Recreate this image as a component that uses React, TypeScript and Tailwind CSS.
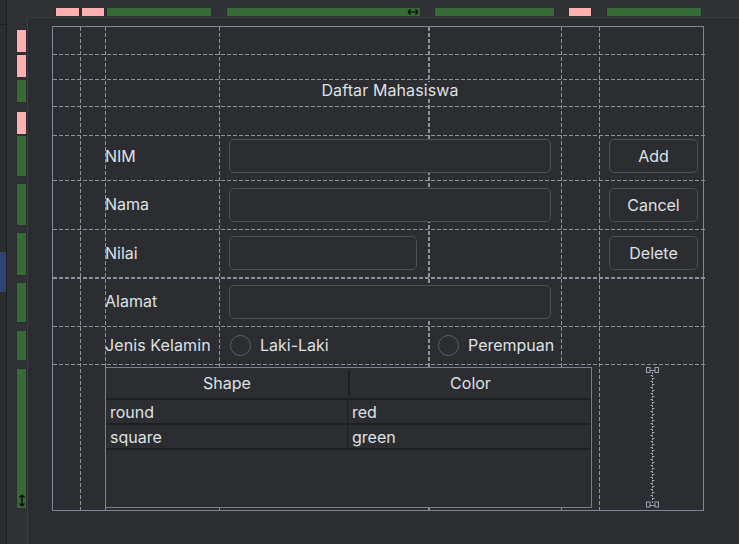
import React from "react";

const DASH = "#8a93a2";

function Field({ className = "" }: { className?: string }) {
  return <div className={"h-[34px] rounded-[5px] border border-[#4e5157] bg-[#2b2d30] " + className} />;
}

function Btn({ label }: { label: string }) {
  return (
    <div className="h-[34px] w-[89px] rounded-[5px] border border-[#4e5157] bg-[#2b2d30] flex items-center justify-center text-[#dfe1e5]">
      {label}
    </div>
  );
}

function Radio({ label }: { label: string }) {
  return (
    <div className="flex items-center">
      <div className="w-[21px] h-[21px] rounded-full border border-[#5f6268] bg-[#2b2d30]" />
      <span className="ml-[9px] text-[#dfe1e5]">{label}</span>
    </div>
  );
}

function Guides() {
  const vx = [27.5, 52.5, 166.5, 508.5, 546.5];
  const hy = [27.5, 52.5, 79.5, 108.5, 153.5, 202.5, 299.5, 337.5];
  return (
    <svg className="absolute left-0 top-0 pointer-events-none" width="653" height="483" style={{ overflow: "visible" }}>
      {vx.map((x) => (
        <line key={"v" + x} x1={x} y1={0} x2={x} y2={483} stroke={DASH} strokeWidth={1} strokeDasharray="4 2" />
      ))}
      <line x1={376} y1={0} x2={376} y2={483} stroke={DASH} strokeWidth={2} strokeDasharray="4 2" />
      {hy.map((y) => (
        <line key={"h" + y} x1={0} y1={y} x2={652} y2={y} stroke={DASH} strokeWidth={1} strokeDasharray="4 2" />
      ))}
      <line x1={0} y1={251} x2={652} y2={251} stroke={DASH} strokeWidth={2} strokeDasharray="4 2" />
    </svg>
  );
}

function Spacer() {
  const ticks = Array.from({ length: 42 }, (_, i) => i);
  return (
    <svg width="14" height="141" viewBox="0 0 14 141" fill="none" stroke="#9aa3b1" strokeWidth="1">
      <rect x="0.5" y="0.5" width="3.5" height="5" />
      <rect x="9" y="0.5" width="3.5" height="5" />
      <path d="M4 3.5 H9" />
      <line x1="6.5" y1="5" x2="6.5" y2="136" strokeDasharray="2 1" />
      {ticks.map((i) => (
        <path key={i} d={i % 2 === 0 ? `M4.5 ${8.5 + i * 3} H6.5` : `M6.5 ${8.5 + i * 3} H8.5`} />
      ))}
      <rect x="0.5" y="135" width="3.5" height="5" />
      <rect x="9" y="135" width="3.5" height="5" />
      <path d="M4 138.5 H9" />
    </svg>
  );
}

export default function App() {
  return (
    <div className="w-[739px] h-[544px] overflow-hidden flex bg-[#303134] font-['Inter','Noto_Sans',sans-serif] text-[16px] text-[#dfe1e5]">
      {/* far-left strip */}
      <div className="w-[7px] h-full flex flex-col bg-[#2b2d30] border-r border-[#1e1f22]">
        <div className="h-[25px] border-b border-[#1e1f22]" />
        <div className="mt-[227px] h-[40px] w-[6px] bg-[#2e4573]" />
      </div>

      <div className="flex-1 flex flex-col">
        {/* top ruler */}
        <div className="h-[17px] flex items-start">
          <div className="ml-[48px] mt-[7px] w-[25px] h-[10px] bg-[#ffb1b1] border border-[#2b2d30]" />
          <div className="ml-[1px] mt-[7px] w-[24px] h-[10px] bg-[#ffb1b1] border border-[#2b2d30]" />
          <div className="ml-[1px] mt-[7px] w-[106px] h-[10px] bg-[#366a37] border border-[#2b2d30]" />
          <div className="ml-[14px] mt-[7px] w-[195px] h-[10px] bg-[#366a37] border border-[#2b2d30] flex items-center justify-end pr-[1px]">
            <svg width="12" height="8" viewBox="0 0 12 8" fill="none" stroke="#000" strokeWidth="1.2">
              <path d="M1 4 H11 M1 4 L3.5 1.5 M1 4 L3.5 6.5 M11 4 L8.5 1.5 M11 4 L8.5 6.5" />
            </svg>
          </div>
          <div className="ml-[13px] mt-[7px] w-[121px] h-[10px] bg-[#366a37] border border-[#2b2d30]" />
          <div className="ml-[13px] mt-[7px] w-[24px] h-[10px] bg-[#ffb1b1] border border-[#2b2d30]" />
          <div className="ml-[14px] mt-[7px] w-[96px] h-[10px] bg-[#366a37] border border-[#2b2d30]" />
        </div>

        <div className="flex-1 flex">
          {/* left ruler */}
          <div className="w-[20px] flex flex-col">
            <div className="ml-[9px] mt-[12px] w-[11px] h-[24px] bg-[#ffb1b1] border border-[#2b2d30]" />
            <div className="ml-[9px] mt-[1px] w-[11px] h-[24px] bg-[#ffb1b1] border border-[#2b2d30]" />
            <div className="ml-[9px] mt-[1px] w-[11px] h-[24px] bg-[#366a37] border border-[#2b2d30]" />
            <div className="ml-[9px] mt-[8px] w-[11px] h-[24px] bg-[#ffb1b1] border border-[#2b2d30]" />
            <div className="ml-[9px] w-[11px] h-[42px] bg-[#366a37] border border-[#2b2d30]" />
            <div className="ml-[9px] mt-[6px] w-[11px] h-[43px] bg-[#366a37] border border-[#2b2d30]" />
            <div className="ml-[9px] mt-[6px] w-[11px] h-[44px] bg-[#366a37] border border-[#2b2d30]" />
            <div className="ml-[9px] mt-[6px] w-[11px] h-[41px] bg-[#366a37] border border-[#2b2d30]" />
            <div className="ml-[9px] mt-[7px] w-[11px] h-[31px] bg-[#366a37] border border-[#2b2d30]" />
            <div className="ml-[9px] mt-[7px] w-[11px] h-[141px] bg-[#366a37] border border-[#2b2d30] flex flex-col justify-end items-center pb-[1px]">
              <svg width="8" height="13" viewBox="0 0 8 13" fill="none" stroke="#000" strokeWidth="1.2">
                <path d="M4 1 V12 M4 1 L1.5 3.5 M4 1 L6.5 3.5 M4 12 L1.5 9.5 M4 12 L6.5 9.5" />
              </svg>
            </div>
          </div>

          {/* design panel */}
          <div className="flex-1 bg-[#2b2d30] border-l border-t border-[#3b3d41]">
            <div className="ml-[24px] mt-[8px] w-[652px] h-[485px] border border-[#7e8898] relative">
              <Guides />
              <div className="relative grid grid-cols-[27px_25px_114px_209px_133px_38px_104px] grid-rows-[27px_25px_27px_29px_45px_49px_48px_49px_38px_146px] w-[650px] h-[483px]">
                {/* title */}
                <div className="row-start-3 col-start-4 col-span-2 flex items-center justify-center pb-[5px]">
                  <span className="bg-[#2b2d30] leading-[16px] tracking-[0.1px]">Daftar Mahasiswa</span>
                </div>

                {/* NIM */}
                <div className="row-start-5 col-start-3 flex items-center pb-[3px]">NIM</div>
                <div className="row-start-5 col-start-4 col-span-2 px-[10px] pt-[4px]">
                  <Field className="w-full" />
                </div>
                <div className="row-start-5 col-start-7 pl-[10px] pt-[4px]">
                  <Btn label="Add" />
                </div>

                {/* Nama */}
                <div className="row-start-6 col-start-3 flex items-center pb-[1px]">Nama</div>
                <div className="row-start-6 col-start-4 col-span-2 px-[10px] flex items-center">
                  <Field className="w-full" />
                </div>
                <div className="row-start-6 col-start-7 pl-[10px] flex items-center">
                  <Btn label="Cancel" />
                </div>

                {/* Nilai */}
                <div className="row-start-7 col-start-3 flex items-center">Nilai</div>
                <div className="row-start-7 col-start-4 pl-[10px] pr-[11px] flex items-center">
                  <Field className="w-full" />
                </div>
                <div className="row-start-7 col-start-7 pl-[10px] flex items-center">
                  <Btn label="Delete" />
                </div>

                {/* Alamat */}
                <div className="row-start-8 col-start-3 flex items-center pb-[1px]">Alamat</div>
                <div className="row-start-8 col-start-4 col-span-2 px-[10px] flex items-center">
                  <Field className="w-full" />
                </div>

                {/* Jenis Kelamin */}
                <div className="row-start-9 col-start-3 flex items-center">
                  <span className="whitespace-nowrap tracking-[0.1px]">Jenis Kelamin</span>
                </div>
                <div className="row-start-9 col-start-4 pl-[11px] flex items-center">
                  <Radio label="Laki-Laki" />
                </div>
                <div className="row-start-9 col-start-5 pl-[10px] flex items-center">
                  <Radio label="Perempuan" />
                </div>

                {/* table */}
                <div className="row-start-10 col-start-3 col-span-4 pt-[3px]">
                  <div className="w-[487px] h-[141px] border border-[#77808f] bg-[#2b2d30] flex flex-col">
                    <div className="h-[30px] flex">
                      <div className="w-[242px] flex items-center justify-center">Shape</div>
                      <div className="w-[2px] my-[2px] bg-[#1e1f22]" />
                      <div className="flex-1 flex items-center justify-center">Color</div>
                    </div>
                    <div className="border-t-2 border-[#1e1f22] h-[25px] flex border-r border-r-[#1e1f22]">
                      <div className="w-[241px] pl-[4px] flex items-center">round</div>
                      <div className="w-[1px] bg-[#1e1f22]" />
                      <div className="flex-1 pl-[4px] flex items-center">red</div>
                    </div>
                    <div className="border-t-2 border-[#1e1f22] h-[25px] flex border-r border-r-[#1e1f22]">
                      <div className="w-[241px] pl-[4px] flex items-center">square</div>
                      <div className="w-[1px] bg-[#1e1f22]" />
                      <div className="flex-1 pl-[4px] flex items-center">green</div>
                    </div>
                    <div className="border-t-2 border-[#1e1f22]" />
                  </div>
                </div>

                {/* spacer */}
                <div className="row-start-10 col-start-7 pl-[47px] pt-[3px]">
                  <Spacer />
                </div>
              </div>
            </div>
          </div>
        </div>
      </div>
    </div>
  );
}
